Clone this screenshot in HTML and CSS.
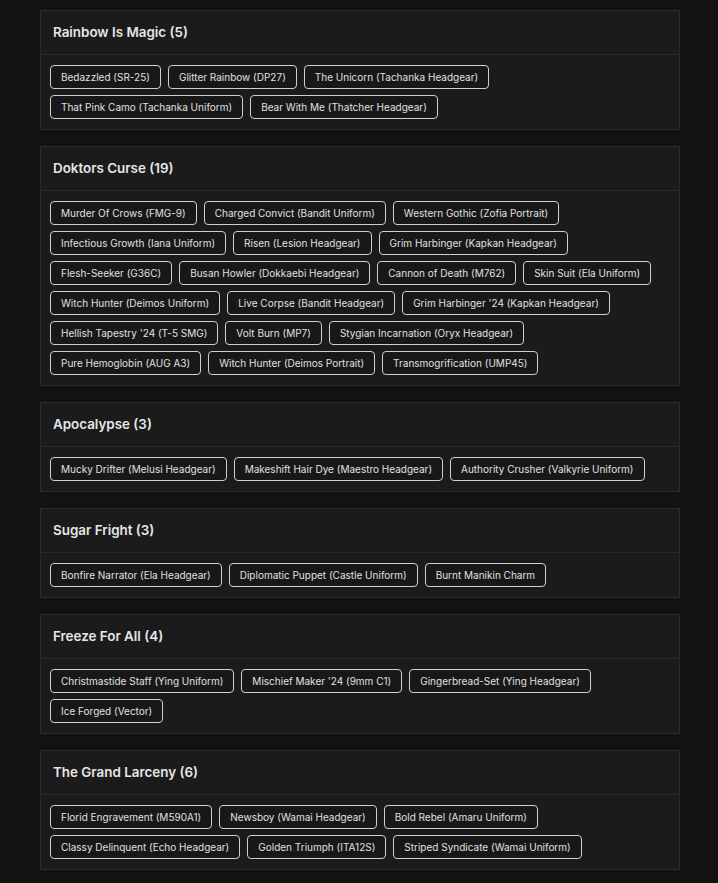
FILE: index.html
```html
<!DOCTYPE html>
<html lang="en">
<head>
<meta charset="utf-8">
<title>Collections</title>
<link rel="stylesheet" href="styles.css">
</head>
<body>
<main class="list">
  <section class="card">
    <h2 class="card-title">Rainbow Is Magic (5)</h2>
    <div class="chips">
      <span class="chip">Bedazzled (SR-25)</span>
      <span class="chip">Glitter Rainbow (DP27)</span>
      <span class="chip">The Unicorn (Tachanka Headgear)</span>
      <span class="chip">That Pink Camo (Tachanka Uniform)</span>
      <span class="chip">Bear With Me (Thatcher Headgear)</span>
    </div>
  </section>
  <section class="card">
    <h2 class="card-title">Doktors Curse (19)</h2>
    <div class="chips">
      <span class="chip">Murder Of Crows (FMG-9)</span>
      <span class="chip">Charged Convict (Bandit Uniform)</span>
      <span class="chip">Western Gothic (Zofia Portrait)</span>
      <span class="chip">Infectious Growth (Iana Uniform)</span>
      <span class="chip">Risen (Lesion Headgear)</span>
      <span class="chip">Grim Harbinger (Kapkan Headgear)</span>
      <span class="chip">Flesh-Seeker (G36C)</span>
      <span class="chip">Busan Howler (Dokkaebi Headgear)</span>
      <span class="chip">Cannon of Death (M762)</span>
      <span class="chip">Skin Suit (Ela Uniform)</span>
      <span class="chip">Witch Hunter (Deimos Uniform)</span>
      <span class="chip">Live Corpse (Bandit Headgear)</span>
      <span class="chip">Grim Harbinger '24 (Kapkan Headgear)</span>
      <span class="chip">Hellish Tapestry '24 (T-5 SMG)</span>
      <span class="chip">Volt Burn (MP7)</span>
      <span class="chip">Stygian Incarnation (Oryx Headgear)</span>
      <span class="chip">Pure Hemoglobin (AUG A3)</span>
      <span class="chip">Witch Hunter (Deimos Portrait)</span>
      <span class="chip">Transmogrification (UMP45)</span>
    </div>
  </section>
  <section class="card">
    <h2 class="card-title">Apocalypse (3)</h2>
    <div class="chips">
      <span class="chip">Mucky Drifter (Melusi Headgear)</span>
      <span class="chip">Makeshift Hair Dye (Maestro Headgear)</span>
      <span class="chip">Authority Crusher (Valkyrie Uniform)</span>
    </div>
  </section>
  <section class="card">
    <h2 class="card-title">Sugar Fright (3)</h2>
    <div class="chips">
      <span class="chip">Bonfire Narrator (Ela Headgear)</span>
      <span class="chip">Diplomatic Puppet (Castle Uniform)</span>
      <span class="chip">Burnt Manikin Charm</span>
    </div>
  </section>
  <section class="card">
    <h2 class="card-title">Freeze For All (4)</h2>
    <div class="chips">
      <span class="chip">Christmastide Staff (Ying Uniform)</span>
      <span class="chip">Mischief Maker '24 (9mm C1)</span>
      <span class="chip">Gingerbread-Set (Ying Headgear)</span>
      <span class="chip">Ice Forged (Vector)</span>
    </div>
  </section>
  <section class="card">
    <h2 class="card-title">The Grand Larceny (6)</h2>
    <div class="chips">
      <span class="chip">Florid Engravement (M590A1)</span>
      <span class="chip">Newsboy (Wamai Headgear)</span>
      <span class="chip">Bold Rebel (Amaru Uniform)</span>
      <span class="chip">Classy Delinquent (Echo Headgear)</span>
      <span class="chip">Golden Triumph (ITA12S)</span>
      <span class="chip">Striped Syndicate (Wamai Uniform)</span>
    </div>
  </section>
</main>
</body>
</html>
```
FILE: styles.css
```css
html, body {
  margin: 0;
  padding: 0;
  background: #121212;
}
body {
  font-family: Inter, "Open Sans", sans-serif;
  color: #e4e4e4;
}
.list {
  width: 640px;
  padding: 10px 0 0 40px;
  display: flex;
  flex-direction: column;
  gap: 16px;
}
.card {
  background: #1b1b1b;
  border: 1px solid #2a2a2a;
}
.card-title {
  margin: 0;
  height: 43px;
  line-height: 43px;
  padding: 0 12px;
  font-size: 13.4px;
  font-weight: 600;
  color: #e6e6e6;
  border-bottom: 1px solid #2a2a2a;
}
.chips {
  display: flex;
  flex-wrap: wrap;
  gap: 6px 7px;
  padding: 10px 9px;
}
.chip {
  box-sizing: border-box;
  height: 24px;
  line-height: 22px;
  padding: 0 10px;
  font-size: 10px;
  color: #e0e0e0;
  background: #181818;
  border: 1px solid #cfcfcf;
  border-radius: 4px;
  white-space: nowrap;
}
```
